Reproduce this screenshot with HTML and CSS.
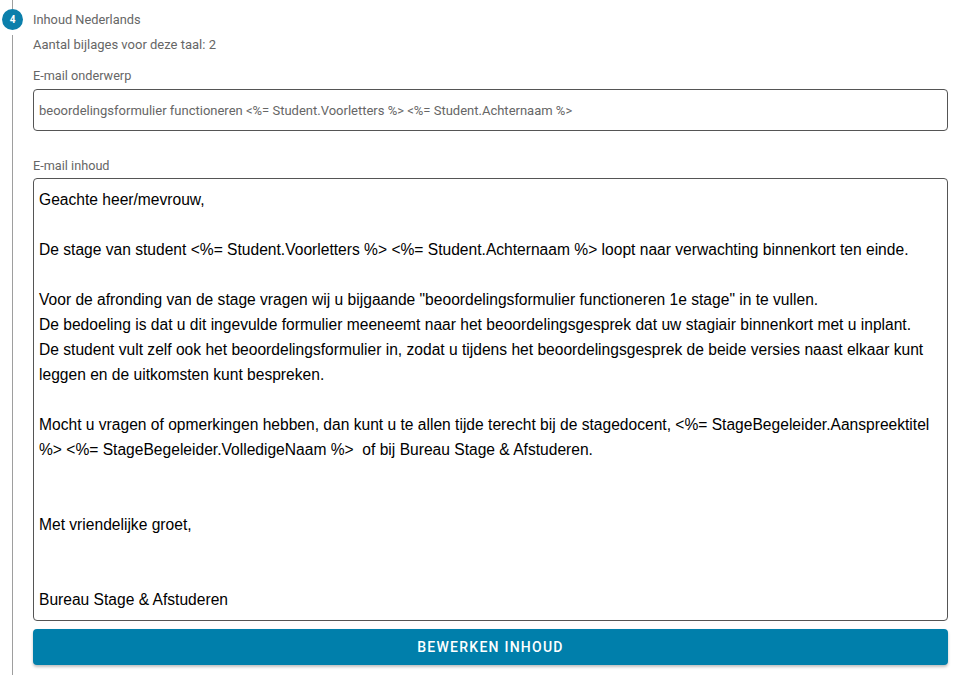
FILE: index.html
```html
<!DOCTYPE html>
<html lang="nl">
<head>
    <meta charset="UTF-8">
    <title>Inhoud Nederlands</title>
    <link rel="stylesheet" href="styles.css">
</head>
<body>
    <div class="step">
        <div class="step-rail">
            <div class="rail-line rail-top"></div>
            <div class="step-number">4</div>
            <div class="rail-line rail-rest"></div>
        </div>

        <div class="step-body">
            <div class="step-title">Inhoud Nederlands</div>
            <div class="step-sub">Aantal bijlages voor deze taal: 2</div>

            <div class="field">
                <label class="field-label">E-mail onderwerp</label>
                <div class="field-input">beoordelingsformulier functioneren &lt;%= Student.Voorletters %&gt; &lt;%= Student.Achternaam %&gt;</div>
            </div>

            <div class="field field-body">
                <label class="field-label">E-mail inhoud</label>
                <div class="mail-text">Geachte heer/mevrouw,

De stage van student &lt;%= Student.Voorletters %&gt; &lt;%= Student.Achternaam %&gt; loopt naar verwachting binnenkort ten einde.

Voor de afronding van de stage vragen wij u bijgaande "beoordelingsformulier functioneren 1e stage" in te vullen.
De bedoeling is dat u dit ingevulde formulier meeneemt naar het beoordelingsgesprek dat uw stagiair binnenkort met u inplant.
De student vult zelf ook het beoordelingsformulier in, zodat u tijdens het beoordelingsgesprek de beide versies naast elkaar kunt leggen en de uitkomsten kunt bespreken.

Mocht u vragen of opmerkingen hebben, dan kunt u te allen tijde terecht bij de stagedocent, &lt;%= StageBegeleider.Aanspreektitel %&gt; &lt;%= StageBegeleider.VolledigeNaam %&gt;  of bij Bureau Stage &amp; Afstuderen.


Met vriendelijke groet,


Bureau Stage &amp; Afstuderen</div>
            </div>

            <button class="edit-btn">Bewerken inhoud</button>
        </div>
    </div>
</body>
</html>
```

FILE: styles.css
```css
* {
    margin: 0;
    padding: 0;
    box-sizing: border-box;
}

body {
    background: #ffffff;
    font-family: 'Roboto', sans-serif;
    color: #666666;
    overflow: hidden;
}

.step {
    display: flex;
    width: 948px;
}

/* vertical rail with the step number */
.step-rail {
    width: 33px;
    flex-shrink: 0;
    display: flex;
    flex-direction: column;
    align-items: flex-start;
}

.rail-line {
    width: 1px;
    background: #9e9e9e;
    margin-left: 12px;
}

.rail-top {
    height: 9px;
}

.rail-rest {
    flex: 1;
    margin-top: 5px;
    min-height: 640px;
}

.step-number {
    width: 21px;
    height: 21px;
    margin-left: 2px;
    border-radius: 50%;
    background: #0b7fab;
    color: #ffffff;
    font-size: 10px;
    font-weight: 700;
    display: flex;
    align-items: center;
    justify-content: center;
}

.step-body {
    flex: 1;
    padding-top: 12px;
}

.step-title {
    font-size: 12.8px;
    line-height: 16px;
    color: #666666;
}

.step-sub {
    font-size: 13px;
    line-height: 16px;
    margin-top: 9px;
    color: #666666;
}

.field {
    margin-top: 15px;
}

.field-label {
    display: block;
    font-size: 12.7px;
    line-height: 16px;
    color: #666666;
    margin-bottom: 5px;
}

.field-input {
    height: 42px;
    border: 1px solid #555555;
    border-radius: 4px;
    padding: 0 5px;
    display: flex;
    align-items: center;
    font-size: 13px;
    color: #666666;
}

.field-body {
    margin-top: 27px;
}

.field-body .field-label {
    margin-bottom: 4px;
}

.mail-text {
    height: 443px;
    border: 1px solid #555555;
    border-radius: 4px;
    padding: 8px 5px;
    font-family: 'Liberation Sans', Arial, sans-serif;
    font-size: 15.6px;
    line-height: 25px;
    color: #000000;
    white-space: pre-wrap;
    overflow: hidden;
}

.edit-btn {
    display: block;
    width: 100%;
    height: 36px;
    margin-top: 8px;
    border: none;
    border-radius: 4px;
    background: #007fab;
    color: #ffffff;
    font-family: 'Roboto', sans-serif;
    font-size: 14px;
    font-weight: 500;
    letter-spacing: 1.25px;
    text-transform: uppercase;
    box-shadow: 0 2px 3px rgba(0, 0, 0, 0.25);
    cursor: pointer;
}
```
